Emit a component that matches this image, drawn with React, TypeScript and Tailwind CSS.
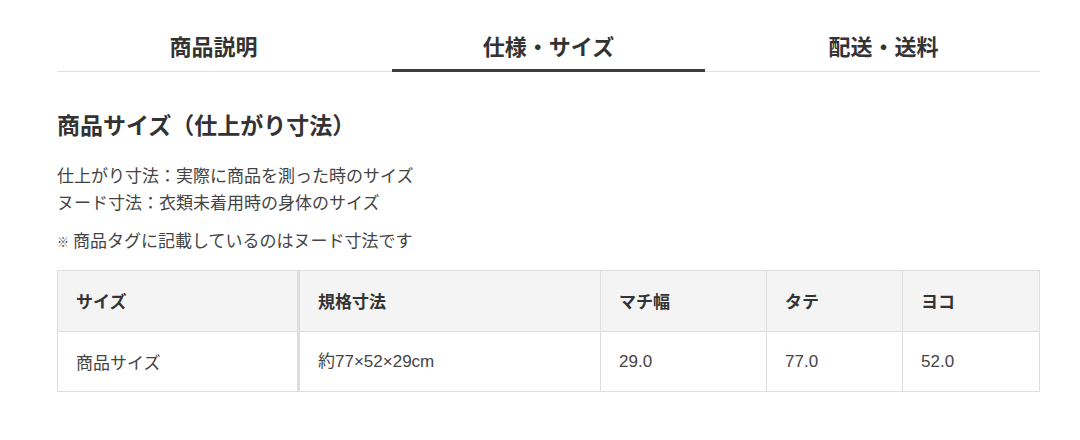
import React from 'react';

const tabs = ['商品説明', '仕様・サイズ', '配送・送料'];

const font = { fontFamily: '"Noto Sans CJK JP", "Liberation Sans", sans-serif' };
const latin = { fontFamily: '"Liberation Sans", "Noto Sans CJK JP", sans-serif' };

export default function App() {
  const active = 1;

  return (
    <div className="min-h-screen bg-white text-[#333]" style={font}>
      <div className="ml-[57px] w-[983px] pt-[22px]">
        {/* tabs */}
        <div className="grid grid-cols-3 gap-[22px] border-b border-[#e0e0e0]">
          {tabs.map((t, i) => (
            <div
              key={t}
              className={
                i === active
                  ? 'h-[50px] -mb-px flex justify-center text-[22px] font-bold leading-[46px] border-b-[3px] border-[#3c3c44]'
                  : 'h-[50px] -mb-px flex justify-center text-[22px] font-bold leading-[46px]'
              }
            >
              {t}
            </div>
          ))}
        </div>

        <h2 className="mt-[35px] text-[23px] font-bold leading-[34px] text-[#333]">
          商品サイズ（仕上がり寸法）
        </h2>

        <div className="mt-[20px] text-[17px] leading-[27px] text-[#444]">
          <p>仕上がり寸法：実際に商品を測った時のサイズ</p>
          <p>ヌード寸法：衣類未着用時の身体のサイズ</p>
        </div>
        <p className="mt-[13px] text-[17px] leading-[24px] text-[#444]">
          <span className="text-[12px] mr-[4px]">※</span>商品タグに記載しているのはヌード寸法です
        </p>

        {/* size table */}
        <table className="mt-[16px] w-full border-collapse text-[17px] text-[#444]">
          <thead>
            <tr className="bg-[#f4f4f4] h-[61px]">
              <th className="w-[241px] border border-[#dedede] border-r-[3px] pl-[18px] text-left font-bold text-[#333]">サイズ</th>
              <th className="w-[302px] border border-[#dedede] pl-[18px] text-left font-bold text-[#333]">規格寸法</th>
              <th className="w-[166px] border border-[#dedede] pl-[18px] text-left font-bold text-[#333]">マチ幅</th>
              <th className="w-[136px] border border-[#dedede] pl-[18px] text-left font-bold text-[#333]">タテ</th>
              <th className="border border-[#dedede] pl-[18px] text-left font-bold text-[#333]">ヨコ</th>
            </tr>
          </thead>
          <tbody>
            <tr className="h-[60px]">
              <td className="border border-[#dedede] border-r-[3px] pl-[18px]">商品サイズ</td>
              <td className="border border-[#dedede] pl-[18px]" style={latin}>約77×52×29cm</td>
              <td className="border border-[#dedede] pl-[18px]" style={latin}>29.0</td>
              <td className="border border-[#dedede] pl-[18px]" style={latin}>77.0</td>
              <td className="border border-[#dedede] pl-[18px]" style={latin}>52.0</td>
            </tr>
          </tbody>
        </table>
      </div>
    </div>
  );
}
